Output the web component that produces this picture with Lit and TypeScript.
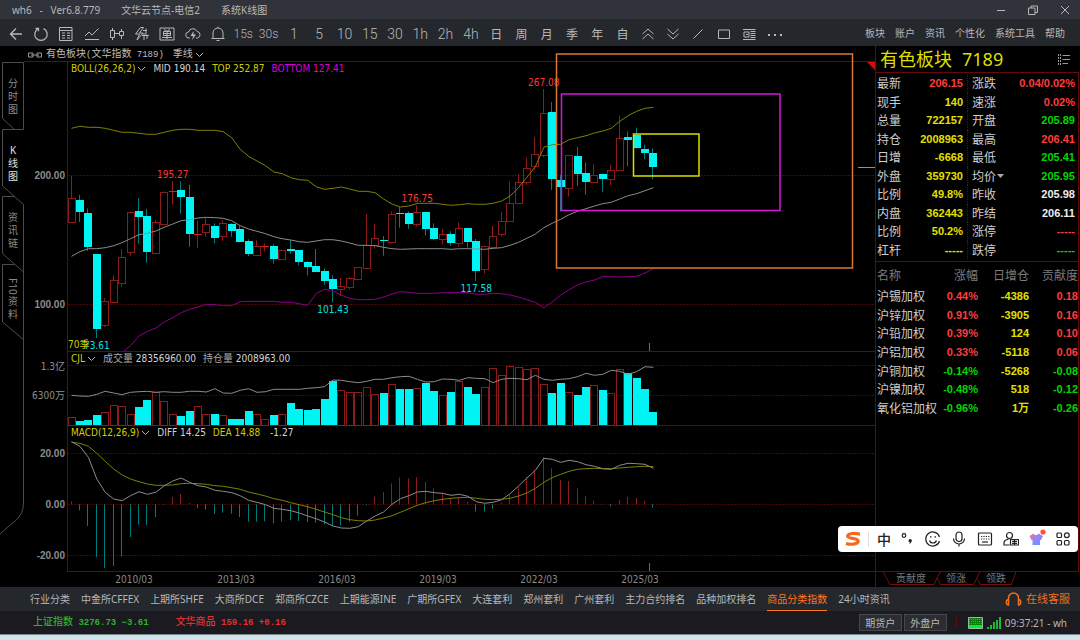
import { LitElement, html, svg, css } from "lit";
import { customElement } from "lit/decorators.js";
import { classMap } from "lit/directives/class-map.js";

/* One quarter per entry: rising flag, then high / body top / body bottom / low
   on a vertical scale of three units to the pixel. */
type Candle = [number, number, number, number, number];
const CANDLES: Candle[] = [
  [1, 347, 414, 485, 488], [0, 405, 420, 456, 486], [0, 445, 459, 560, 573], [0, 582, 582, 806, 834],
  [1, 714, 724, 794, 801], [1, 646, 661, 727, 729], [1, 567, 591, 668, 681], [1, 455, 455, 577, 587],
  [0, 415, 454, 471, 550], [0, 447, 468, 575, 608], [1, 480, 487, 578, 580], [1, 394, 397, 491, 493],
  [1, 363, 393, 394, 434], [0, 364, 390, 412, 461], [0, 374, 412, 522, 560], [1, 482, 523, 524, 565],
  [1, 473, 493, 515, 530], [0, 490, 497, 535, 550], [1, 481, 488, 527, 543], [0, 490, 492, 513, 530],
  [0, 497, 507, 545, 547], [0, 538, 544, 583, 588], [1, 541, 557, 584, 585], [1, 550, 557, 558, 574],
  [0, 553, 557, 598, 611], [1, 569, 569, 596, 599], [0, 540, 566, 573, 581], [0, 570, 571, 605, 616],
  [0, 603, 607, 620, 646], [0, 567, 619, 635, 635], [0, 625, 633, 664, 675], [0, 645, 657, 687, 727],
  [1, 654, 679, 686, 708], [1, 652, 655, 680, 688], [1, 622, 622, 656, 661], [1, 462, 556, 625, 628],
  [1, 491, 535, 554, 566], [0, 528, 540, 544, 587], [1, 454, 463, 545, 551], [0, 441, 459, 461, 503],
  [0, 454, 458, 492, 506], [1, 436, 457, 491, 500], [0, 456, 457, 507, 527], [0, 490, 504, 538, 540],
  [1, 507, 523, 538, 553], [0, 514, 523, 549, 558], [1, 487, 505, 548, 560], [0, 503, 504, 545, 563],
  [0, 537, 544, 633, 663], [1, 558, 559, 628, 641], [1, 498, 528, 560, 563], [1, 456, 484, 523, 529],
  [1, 365, 430, 482, 484], [1, 342, 366, 428, 431], [1, 293, 325, 367, 375], [1, 232, 283, 319, 330],
  [1, 87, 160, 284, 292], [0, 126, 157, 356, 390], [0, 345, 361, 381, 455], [1, 286, 286, 383, 410],
  [0, 261, 288, 341, 378], [0, 307, 340, 366, 404], [1, 313, 344, 365, 366], [0, 341, 343, 356, 397],
  [1, 316, 331, 356, 375], [1, 167, 235, 331, 333], [0, 215, 231, 240, 319], [0, 203, 226, 264, 266],
  [0, 254, 267, 278, 298], [0, 265, 278, 322, 358],
];
const BOLL_TOP = [205, 199, 202, 202, 205, 211, 217, 217, 220, 223, 223, 217, 211, 208, 208, 211, 211, 211, 215, 233, 268, 289, 303, 317, 336, 341, 353, 359, 361, 380, 388, 385, 381, 387, 394, 394, 398, 417, 432, 441, 438, 430, 430, 430, 433, 436, 434, 431, 433, 433, 430, 423, 408, 383, 352, 320, 262, 254, 253, 239, 233, 227, 219, 213, 205, 184, 167, 154, 145, 142];
const BOLL_MID = [589, 575, 566, 566, 563, 557, 548, 536, 524, 520, 513, 502, 492, 482, 479, 474, 472, 473, 475, 482, 497, 507, 514, 521, 530, 536, 540, 545, 547, 543, 539, 539, 543, 549, 556, 556, 557, 562, 566, 568, 567, 566, 566, 566, 566, 568, 566, 566, 567, 568, 565, 563, 556, 547, 535, 522, 503, 490, 478, 464, 454, 446, 438, 431, 427, 417, 407, 401, 392, 383];
const BOLL_LOW = [857, 828, 814, 804, 786, 773, 758, 748, 741, 733, 734, 737, 737, 725, 724, 724, 724, 724, 727, 727, 731, 736, 701, 688, 692, 706, 715, 719, 719, 718, 711, 702, 695, 697, 700, 700, 700, 698, 698, 698, 698, 703, 703, 700, 701, 705, 711, 719, 727, 743, 726, 705, 689, 675, 666, 660, 650, 650, 651, 650, 649, 639, 626];
const VOLUME = [232, 243, 241, 226, 217, 196, 199, 223, 202, 179, 157, 184, 223, 229, 213, 199, 223, 223, 226, 237, 238, 214, 223, 237, 226, 223, 189, 208, 210, 207, 177, 123, 151, 156, 156, 142, 163, 160, 133, 147, 148, 145, 130, 153, 166, 157, 124, 140, 162, 142, 85, 106, 79, 82, 86, 85, 133, 160, 129, 157, 166, 141, 136, 150, 160, 88, 100, 115, 146, 216];
const OPEN_INTEREST = [166, 168, 169, 163, 154, 159, 164, 157, 155, 154, 157, 155, 157, 157, 154, 154, 156, 146, 159, 160, 151, 146, 157, 155, 148, 148, 148, 148, 145, 143, 140, 120, 121, 125, 128, 124, 118, 118, 113, 110, 109, 118, 126, 125, 117, 118, 121, 113, 115, 116, 128, 118, 115, 116, 119, 106, 118, 121, 118, 116, 110, 100, 106, 103, 91, 94, 103, 95, 80, 82];
const MACD = [484, 511, 558, 651, 684, 678, 649, 591, 554, 555, 531, 494, 471, 462, 489, 504, 509, 522, 518, 521, 531, 545, 545, 544, 550, 545, 541, 543, 546, 548, 553, 557, 556, 545, 527, 495, 470, 456, 430, 412, 415, 411, 426, 445, 459, 475, 474, 486, 515, 515, 506, 488, 465, 440, 412, 390, 352, 385, 420, 423, 445, 468, 482, 494, 499, 480, 471, 474, 483, 503];
const DIFF = [305, 319, 352, 417, 457, 477, 482, 467, 455, 463, 457, 437, 423, 414, 427, 437, 441, 451, 454, 458, 467, 481, 487, 494, 505, 508, 512, 519, 528, 536, 546, 558, 564, 565, 560, 543, 528, 516, 493, 476, 467, 456, 454, 458, 460, 466, 463, 469, 485, 490, 487, 479, 461, 438, 414, 391, 355, 358, 367, 361, 365, 374, 379, 386, 388, 376, 370, 371, 373, 385];
const DEA = [307, 310, 319, 340, 364, 387, 405, 417, 425, 432, 436, 436, 435, 431, 430, 431, 433, 437, 439, 443, 448, 456, 462, 468, 476, 481, 488, 494, 500, 508, 516, 524, 533, 539, 542, 543, 540, 534, 527, 517, 506, 496, 488, 482, 478, 475, 473, 472, 475, 478, 479, 478, 475, 468, 459, 445, 427, 413, 403, 394, 388, 386, 385, 386, 386, 384, 382, 380, 379, 380];

const barX = (i: number) => 3.5 + i * 8.434;
const barLeft = (i: number) => Math.round(barX(i)) - 4;
const priceY = (v: number) => v / 3 - 16;
const volumeY = (v: number) => v / 3 - 25;
const macdY = (v: number) => v / 3 - 100;
const trace = (data: number[], y: (v: number) => number, from = 0) =>
  data.map((v, i) => `${barX(i + from).toFixed(1)},${y(v).toFixed(1)}`).join(" ");

const chevron = html`<svg class="chev" viewBox="0 0 9 6" aria-hidden="true"><path d="M1 1l3.5 3.5L8 1" /></svg>`;

@customElement("price-chart")
class PriceChart extends LitElement {
  static styles = css`
    :host { display: flex; flex-direction: column; min-width: 0; font: 10px/14px "DejaVu Sans Condensed", "DejaVu Sans", "Noto Sans CJK SC", sans-serif; color: #d4d4d4; }
    .head { display: flex; align-items: center; gap: 4px; height: 16px; box-sizing: border-box; padding: 2px 0 0 4px; border-bottom: 1px solid #640a0a; font-family: "Liberation Mono", "Noto Sans CJK SC", monospace; line-height: 12px; color: #bdbdbd; white-space: pre; }
    .chain { width: 14px; height: 8px; fill: none; stroke: #999; }
    .small { font-size: 9px; }
    button { display: inline-flex; align-items: center; gap: 2px; padding: 0; border: 0; background: none; font: inherit; color: inherit; }
    .period { margin-left: 5px; }
    .chev { width: 9px; height: 6px; fill: none; stroke: currentColor; }
    .pane { display: grid; grid-template: minmax(0, 1fr) / 43px minmax(0, 1fr); }
    .pane-price { height: 290px; }
    .pane-volume { height: 74px; }
    .pane-macd { height: 146px; }
    .body { display: flex; flex-direction: column; min-width: 0; min-height: 0; border-left: 1px solid #640a0a; border-bottom: 1px solid #640a0a; }
    .legend { display: flex; align-items: center; gap: 7px; flex: none; height: 14px; padding-left: 3px; white-space: pre; }
    .pane-volume .legend { height: 13px; }
    .plot, .scale { display: block; width: 100%; overflow: visible; }
    .plot { flex: 1 1 0; height: 0; min-height: 0; }
    .scale { height: 100%; min-height: 0; }
    .scale text { text-anchor: end; fill: #8c8c8c; font: 10px "DejaVu Sans Condensed", "Noto Sans CJK SC", sans-serif; }
    .scale .b { font: bold 10px "Liberation Sans", sans-serif; }
    .dates { display: block; height: 15px; margin-left: 44px; overflow: visible; }
    .dates text { text-anchor: middle; fill: #8a8a8a; }
    .yellow { color: #cfcf00; }
    .magenta { color: #d800d8; }
    .dim { color: #a8a8a8; }
    .grid { stroke: #480606; stroke-dasharray: 2 1; shape-rendering: crispEdges; }
    .rise { fill: none; stroke: #8c1c1c; }
    .candle-fall { fill: #00f4f4; }
    .wick-fall { stroke: #007c7c; }
    .tl { fill: none; stroke: #808000; }
    .ml { fill: none; stroke: #8c8c8c; }
    .bl { fill: none; stroke: #8a008a; }
    .mark { text-anchor: middle; }
    .high { fill: #ff3838; }
    .low { fill: #00e0e0; }
    .tick { stroke: #6a6a6a; }
  `;

  private candle([rise, high, top, bottom, low]: Candle, i: number) {
    const x = barLeft(i);
    const cx = x + 3.5;
    const yt = Math.round(priceY(top));
    const h = Math.max(1, Math.round(priceY(bottom)) - yt);
    const yh = priceY(high);
    const yl = priceY(low);
    if (!rise) {
      return svg`<path class="wick-fall" d="M${cx} ${yh}V${yl}" /><rect class="candle-fall" x=${x} y=${yt} width="8" height=${h} />`;
    }
    if (h <= 1) {
      return svg`<path class="rise" d="M${cx} ${yh}V${yl}" /><path stroke="#d02020" d="M${x} ${yt + 0.5}h8" />`;
    }
    return svg`<path class="rise" d="M${cx} ${yh}V${yt}M${cx} ${yt + h}V${yl}" /><rect class="rise" x=${x + 0.5} y=${yt + 0.5} width="7" height=${h} />`;
  }

  private volumeBar(v: number, i: number) {
    const x = barLeft(i);
    const y = Math.round(volumeY(v));
    return CANDLES[i][0]
      ? svg`<rect class="rise" x=${x + 0.5} y=${y + 0.5} width="7" height=${60 - y} />`
      : svg`<rect class="candle-fall" x=${x} y=${y} width="8" height=${60 - y} />`;
  }

  private macdBar(v: number, i: number) {
    const x = barLeft(i) + 3.5;
    return svg`<path stroke=${v < 493 ? "#8c1c1c" : "#007c7c"} d="M${x} ${macdY(493)}V${macdY(v)}" />`;
  }

  private mark(i: number, y: number, text: string, cls: string) {
    return svg`<text class="mark ${cls}" x=${barX(i)} y=${y}>${text}</text>`;
  }

  render() {
    return html`
      <div class="head">
        <svg class="chain" viewBox="0 0 14 8"><path d="M.5 2h4.5v4H.5zM9 2h4.500v4H9zM3 4h8" /></svg>
        <span>有色板块<span class="small">(</span>文华指数<span class="small"> 7189)</span></span>
        <button class="period">季线${chevron}</button>
      </div>
      <section class="pane pane-price">
        <svg class="scale"><text class="b" x="41" y="117">200.00</text><text class="b" x="41" y="246">100.00</text></svg>
        <div class="body">
          <div class="legend">
            <button class="yellow">BOLL(26,26,2)${chevron}</button><span>MID 190.14</span>
            <span class="yellow">TOP 252.87</span><span class="magenta">BOTTOM 127.41</span>
          </div>
          <svg class="plot">
            <line class="grid" x1="0" x2="100%" y1="99.5" y2="99.5" />
            <line class="grid" x1="0" x2="100%" y1="228.5" y2="228.5" />
            ${CANDLES.map((c, i) => this.candle(c, i))}
            <polyline class="tl" points=${trace(BOLL_TOP, priceY)} />
            <polyline class="ml" points=${trace(BOLL_MID, priceY)} />
            <polyline class="bl" points=${"56,275 " + trace(BOLL_LOW, priceY, 7)} />
            <text x="0" y="272" fill="#cfcf00">70季</text>
            ${this.mark(3, 273, "73.61", "low")}
            ${this.mark(12, 102, "195.27", "high")}
            ${this.mark(31, 237, "101.43", "low")}
            ${this.mark(41, 126, "176.75", "high")}
            ${this.mark(48, 216, "117.58", "low")}
            ${this.mark(56, 10, "267.08", "high")}
            <path class="tick" d="M581.5 267v8" />
            <rect x="488.5" y="-22" width="296" height="214" fill="none" stroke="#dc7830" stroke-width="1.5" />
            <rect x="493.5" y="18" width="218.5" height="116.5" fill="none" stroke="#d818d8" stroke-width="1.5" />
            <rect x="565.5" y="58" width="65.5" height="42" fill="none" stroke="#dcdc00" stroke-width="1.5" />
            <svg x="100%" overflow="visible"><polygon points="-8,-14 0,-14 0,-6" fill="#d01010" /><path stroke="#909090" d="M-17 91.5H0" /></svg>
          </svg>
        </div>
      </section>
      <section class="pane pane-volume">
        <svg class="scale"><text x="41" y="18">1.3亿</text><text x="41" y="47">6300万</text></svg>
        <div class="body">
          <div class="legend">
            <button class="yellow">CJL${chevron}</button>
            <span><span class="dim">成交量 </span>28356960.00</span><span><span class="dim">持仓量 </span>2008963.00</span>
          </div>
          <svg class="plot">
            <line class="grid" x1="0" x2="100%" y1=".5" y2=".5" />
            <line class="grid" x1="0" x2="100%" y1="30.5" y2="30.5" />
            ${VOLUME.map((v, i) => this.volumeBar(v, i))}
            <polyline class="ml" points=${trace(OPEN_INTEREST, volumeY)} />
          </svg>
        </div>
      </section>
      <section class="pane pane-macd">
        <svg class="scale"><text class="b" x="41" y="31">20.00</text><text class="b" x="41" y="82">0.00</text><text class="b" x="41" y="133">-20.00</text></svg>
        <div class="body">
          <div class="legend">
            <button class="yellow">MACD(12,26,9)${chevron}</button><span>DIFF 14.25</span>
            <span class="yellow">DEA 14.88</span><span> -1.27</span>
          </div>
          <svg class="plot">
            <line class="grid" x1="0" x2="100%" y1="13.5" y2="13.5" />
            <line class="grid" x1="0" x2="100%" y1="64.5" y2="64.5" />
            <line class="grid" x1="0" x2="100%" y1="115.5" y2="115.5" />
            ${MACD.map((v, i) => this.macdBar(v, i))}
            <polyline class="tl" points=${trace(DEA, macdY)} />
            <polyline class="ml" points=${trace(DIFF, macdY)} />
            <path class="tick" d="M581.5 123v8" />
          </svg>
        </div>
      </section>
      <svg class="dates">
        ${[2010, 2013, 2016, 2019, 2022, 2025].map((y, i) => svg`<text x=${Math.round(66.3 + i * 101.2)} y="11">${y}/03</text>`)}
      </svg>
    `;
  }
}

const QUOTE: [string, string, string][] = [
  ["最新", "206.15", "r"], ["涨跌", "0.04/0.02%", "r"],
  ["现手", "140", "y"], ["速涨", "0.02%", "r"],
  ["总量", "722157", "y"], ["开盘", "205.89", "g"],
  ["持仓", "2008963", "y"], ["最高", "206.41", "r"],
  ["日增", "-6668", "y"], ["最低", "205.41", "g"],
  ["外盘", "359730", "y"], ["均价", "205.95", "g"],
  ["比例", "49.8%", "y"], ["昨收", "205.98", "w"],
  ["内盘", "362443", "y"], ["昨结", "206.11", "w"],
  ["比例", "50.2%", "y"], ["涨停", "-----", "r"],
  ["杠杆", "-----", "y"], ["跌停", "-----", "g"],
];
const MEMBERS = [
  ["沪锡加权", "0.44%", "-4386", "0.18"], ["沪锌加权", "0.91%", "-3905", "0.16"],
  ["沪铅加权", "0.39%", "124", "0.10"], ["沪铝加权", "0.33%", "-5118", "0.06"],
  ["沪铜加权", "-0.14%", "-5268", "-0.08"], ["沪镍加权", "-0.48%", "518", "-0.12"],
  ["氧化铝加权", "-0.96%", "1万", "-0.26"],
];

@customElement("quote-panel")
class QuotePanel extends LitElement {
  static styles = css`
    :host { display: flex; flex-direction: column; width: 205px; box-sizing: border-box; flex: none; border-left: 1px solid #640a0a; font: 12px/16px "Noto Sans CJK SC", sans-serif; color: #cdcdcd; }
    .title { display: flex; align-items: center; gap: 10px; height: 26px; padding: 0 10px 0 4px; color: #dede00; font: 18px/26px "Noto Sans", "Noto Sans CJK SC", sans-serif; margin: 0; }
    .menu { width: 12px; height: 11px; margin-left: auto; fill: none; stroke: #999; }
    .wrap { flex: 1; display: flex; flex-direction: column; margin-right: 1px; border: 1px solid #640a0a; border-left: 0; }
    .quote { display: grid; grid-template-columns: 91px 1fr; grid-template-rows: repeat(10, 1fr); height: 185px; padding: 1px 0 2px; margin: 0; border-bottom: 1px solid #640a0a; }
    .cell { display: flex; align-items: center; justify-content: space-between; padding: 0 4px 0 1px; }
    .cell:nth-child(even) { padding: 0 3px 0 4px; border-left: 1px dotted #640a0a; }
    dd { margin: 0; font: bold 11px/16px "Liberation Sans", sans-serif; }
    dt { display: flex; align-items: center; }
    .caret { width: 7px; height: 4px; fill: #aaa; margin-left: 1px; }
    .r { color: #ff3c3c; }
    .g { color: #00d800; }
    .y { color: #e0e000; }
    .w { color: #ededed; }
    table { width: 100%; height: 155px; border-collapse: collapse; table-layout: fixed; }
    th, td { padding: 0; text-align: right; white-space: nowrap; font-weight: normal; }
    thead tr { height: 25px; color: #7c7c7c; }
    th:first-child { text-align: left; padding-left: 1px; }
    td { font: bold 11px/16px "Liberation Sans", "Noto Sans CJK SC", sans-serif; }
    .tabs { position: relative; height: 15px; box-sizing: border-box; display: flex; gap: 20px; align-items: center; padding: 0 0 3px 20px; color: #777; font-size: 10px; }
    .tabs button { padding: 0; border: 0; background: none; font: inherit; line-height: 12px; color: inherit; }
    .edge { position: absolute; left: 0; top: -1px; width: 140px; height: 15px; fill: none; stroke: #7a0c0c; }
  `;

  render() {
    return html`
      <h1 class="title">有色板块<span>7189</span><svg class="menu" viewBox="0 0 12 11"><path d="M4.500 1.500H12M4.500 5.500H12M4.500 9.500H10" /><path stroke-dasharray="2 1" d="M.5 0v11M2.500 0v11" /></svg></h1>
      <div class="wrap">
        <dl class="quote">
          ${QUOTE.map(([k, v, c]) => html`<div class="cell">
            <dt>${k}${k === "均价" ? html`<svg class="caret" viewBox="0 0 7 4"><path d="M0 0h7L3.500 4z" /></svg>` : ""}</dt><dd class=${c}>${v}</dd></div>`)}
        </dl>
        <table>
          <colgroup><col width="61" /><col width="41" /><col width="51" /><col width="49" /></colgroup>
          <thead><tr><th scope="col">名称</th><th scope="col">涨幅</th><th scope="col">日增仓</th><th scope="col">贡献度</th></tr></thead>
          <tbody>
            ${MEMBERS.map(([n, p, d, w]) => {
              const tone = p.startsWith("-") ? "g" : "r";
              return html`<tr><th scope="row">${n}</th><td class=${tone}>${p}</td><td class="y">${d}</td><td class=${tone}>${w}</td></tr>`;
            })}
          </tbody>
        </table>
      </div>
      <nav class="tabs">
        <svg class="edge" viewBox="0 0 140 15"><path d="M7 .5l7 13h44l6.500-13M61 7l3.500 6.500h33L104 .5M100.500 7l4 6.500h31L140 .5" /></svg>
        <button>贡献度</button><button>领涨</button><button>领跌</button>
      </nav>
    `;
  }
}

const icon = (body: unknown) => html`<svg class="ico" viewBox="0 0 16 16" aria-hidden="true">${body}</svg>`;
const TOOLS: [string, unknown][] = [
  ["后退", svg`<path stroke-width="1.300" d="M14 8H2.500M8 2.500L2.500 8 8 13.500" />`],
  ["刷新", svg`<path stroke-width="1.200" d="M5.500 2.600A6.200 6.200 0 1 0 10.500 2.600M2.500 2.300h3v3" />`],
  ["报价", svg`<path d="M1.500 1.500h12.500v13H1.500zM1.500 4.500h12.500M4 7h3M9 7h3M4 9.500h3M9 9.500h3M4 12h3M9 12h3" />`],
  ["分时", svg`<path d="M1 10l4-4 3 3 6.500-6.500M1 13.500h14" />`],
  ["K线", svg`<path d="M1.500 4.500h4v7h-4zM3.500 2v2.500M3.500 11.500V14M10.500 5.500h4v4h-4zM12.500 3v2.500M12.500 9.500V13M5.500 7.500h5" />`],
  ["闪电图", svg`<path d="M6.500 1.500L1.500 8h4L3 14l6-7H5.500l4-5.500zM9 4.500h4M12 2.500v7M8 9.500h7M10 7v7M13 9.500v3.500" />`],
  ["下单", svg`<path d="M1 2h14v12H1zM4.500 5.500h7v4h-7zM8 4v9M3 11.500h10M5.500 3l1 2M10.500 3l-1 2M4.500 7.500h7" />`],
  ["云", svg`<path d="M5 12H4a3 3 0 0 1-.5-6A4.500 4.500 0 0 1 12 5.500 3.300 3.300 0 0 1 12.500 12H11" /><path d="M8.500 5L5.500 10H8l-.8 4L11 8.500H8.500z" fill="#b8b8b8" stroke="none" />`],
  ["提醒", svg`<path d="M3 12.500V7a5 5 0 0 1 10 0v5.500M1.500 12.500h13M8 .8V2M6.500 14.500h3" />`],
];
const PERIODS = ["15s", "30s", "1", "5", "10", "15", "30", "1h", "2h", "4h"];
const CJK_PERIODS = ["日", "周", "月", "季", "年", "自"];
const DRAW: [string, unknown][] = [
  ["放大", svg`<path d="M2.500 8L8 3l5.500 5M2.500 13L8 8l5.500 5" />`],
  ["缩小", svg`<path d="M2.500 3L8 8l5.500-5M2.500 8L8 13l5.500-5" />`],
  ["画线", svg`<path d="M3.500 12.500l9-9" />`],
  ["矩形", svg`<path d="M2.500 4h11v8.500h-11z" />`],
  ["栏目", svg`<path d="M2 3.500h12.500M9.500 5.500h5M9.500 7.500h5M9.500 9.500h5M9.500 11.500h5M2 13.500h12.500M3 6h5v5H3zM5 8.500h2" />`],
  ["更多", svg`<path stroke="none" fill="#b8b8b8" d="M2 8h2v2H2zM8 8h2v2H8zM14 8h2v2h-2z" />`],
];
const MENUS = ["板块", "账户", "资讯", "个性化", "系统工具", "帮助"];
const BOARDS = ["行业分类", "中金所CFFEX", "上期所SHFE", "大商所DCE", "郑商所CZCE", "上期能源INE", "广期所GFEX", "大连套利", "郑州套利", "广州套利", "主力合约排名", "品种加权排名", "商品分类指数", "24小时资讯"];

@customElement("app-root")
class AppRoot extends LitElement {
  static styles = css`
    :host { position: relative; display: flex; flex-direction: column; min-height: 100vh; box-sizing: border-box; overflow: hidden; background: #000; color: #b8b8b8; font: 10px/14px "Noto Sans", "Noto Sans CJK SC", sans-serif; }
    button { padding: 0; border: 0; background: none; font: inherit; color: inherit; white-space: nowrap; }
    .titlebar { display: flex; align-items: center; gap: 21px; height: 19px; padding: 0 10px 0 12px; background: #30333a; white-space: pre; }
    .win { display: flex; gap: 22px; margin-left: auto; }
    .win button { display: flex; }
    .win svg { width: 10px; height: 10px; fill: none; stroke: #b8b8b8; }
    .toolbar { display: flex; align-items: center; justify-content: space-between; height: 27px; padding: 0 15px 0 3px; background: #24272c; }
    .tools { display: grid; grid-template-columns: repeat(31, 1fr); align-items: center; width: 784px; height: 27px; box-sizing: border-box; padding-top: 2px; }
    .tools button { display: flex; align-items: center; justify-content: center; min-width: 0; height: 24px; font: 300 14px/16px "Roboto", "Noto Sans CJK SC", sans-serif; }
    .tools .sec { font-size: 12px; }
    .tools .cjk { font: 12px/16px "Noto Sans CJK SC", sans-serif; }
    .ico { flex: none; width: 16px; height: 16px; fill: none; stroke: #b8b8b8; }
    .menus { display: flex; gap: 10px; }
    .main { flex: 1; display: flex; }
    price-chart { flex: 1; }
    .rail { position: relative; width: 24px; padding-top: 16px; box-sizing: border-box; color: #8a8a8a; display: flex; flex-direction: column; }
    .shape { position: absolute; left: 0; top: 0; width: 25px; height: 541px; fill: none; stroke: #4c4c4c; }
    .rail button { display: flex; flex-direction: column; align-items: center; height: 67px; padding: 15px 0 0 2px; line-height: 13px; box-sizing: border-box; }
    .rail .on { color: #e0e0e0; }
    .rail .col { width: 11px; white-space: normal; word-break: break-all; text-align: center; }
    .rail .turned { writing-mode: vertical-rl; line-height: 12px; }
    .boards { display: flex; align-items: stretch; gap: 11px; height: 24px; padding: 0 10px 0 30px; background: #24272c; }
    .boards button { border-bottom: 1px solid transparent; }
    .boards .on { color: #ff7a1c; border-color: #ff7a1c; }
    .boards .service { display: flex; align-items: center; gap: 4px; margin-left: auto; color: #f07020; font-size: 11px; }
    .service svg { width: 17px; height: 14px; fill: none; stroke: #f07020; }
    .status { display: flex; align-items: center; height: 23px; padding: 0 13px 0 33px; background: #1a1a20; border-bottom: 1px solid #7c8a90; }
    .index { font: bold 9px/14px "Liberation Mono", "Noto Sans CJK SC", monospace; white-space: pre; margin-right: 27px; }
    .index b { font-size: 10px; font-weight: 500; }
    .up { color: #e03030; }
    .down { color: #30b030; }
    .right { display: flex; align-items: center; gap: 2px; margin-left: auto; }
    .right button { width: 43px; height: 17px; background: #2c2d33; border: 1px solid #46474d; }
    .bar { width: 1px; height: 11px; margin: 0 9px 0 7px; background: #640a0a; }
    .net { width: 34px; height: 14px; margin-right: 1px; }
    .desk { height: 5px; background: #cfe4eb; }
    .ime { position: absolute; right: 2px; bottom: 88px; display: flex; align-items: center; gap: 8px; height: 26px; padding: 0 6px 0 6px; border-radius: 4px; background: #fff; color: #222; }
    .ime button { display: flex; align-items: center; justify-content: center; width: 18px; height: 22px; font: 500 14px/20px "Noto Sans CJK SC", sans-serif; }
    .ime svg { width: 16px; height: 16px; fill: none; stroke: #222; stroke-width: 1.2; }
    .ime .gap { width: 1px; height: 15px; background: #ddd; margin: 0 -2px 0 -2px; }
    .ime .gap + button { margin-right: -3px; }
  `;

  render() {
    return html`
      <header class="titlebar">
        <span>wh6   -   Ver6.8.779</span><span>文华云节点-电信2</span><span>系统K线图</span>
        <div class="win">
          <button aria-label="最小化"><svg viewBox="0 0 10 10"><path d="M1 5.500h8" /></svg></button>
          <button aria-label="还原"><svg viewBox="0 0 10 10"><path d="M.5 3h6.500v6.500H.5zM3 3V1h6.500v6.500H7" /></svg></button>
          <button aria-label="关闭"><svg viewBox="0 0 10 10"><path d="M1 1l8 8M9 1L1 9" /></svg></button>
        </div>
      </header>
      <div class="toolbar">
        <div class="tools">
          ${TOOLS.map(([t, b]) => html`<button aria-label=${t}>${icon(b)}</button>`)}
          ${PERIODS.map((p) => html`<button class=${classMap({ sec: p.endsWith("s") })}>${p}</button>`)}
          ${CJK_PERIODS.map((p) => html`<button class="cjk">${p}</button>`)}
          ${DRAW.map(([t, b]) => html`<button aria-label=${t}>${icon(b)}</button>`)}
        </div>
        <nav class="menus">${MENUS.map((m) => html`<button>${m}</button>`)}</nav>
      </div>
      <div class="main">
        <nav class="rail">
          <svg class="shape" viewBox="0 0 25 541">
            <path d="M23.500 83.500V16.500H2.500V72.500L14.500 83.500M23.500 83.500H2.500V140L23.500 158.500M14.500 150.500H2.500V207.500L23.500 226M14.500 218.500H2.500V276L23.500 293.500M23.500 158.500V457C23.500 473 12 476 0 488" />
          </svg>
          <button><span class="col">分时图</span></button>
          <button class="on"><span class="col">K线图</span></button>
          <button><span class="col">资讯链</span></button>
          <button><span class="turned">F10</span><span class="col">资料</span></button>
        </nav>
        <price-chart></price-chart>
        <quote-panel></quote-panel>
      </div>
      <nav class="boards">
        ${BOARDS.map((b) => html`<button class=${classMap({ on: b === "商品分类指数" })}>${b}</button>`)}
        <button class="service"><svg viewBox="0 0 17 14"><path stroke-width="1.500" d="M3.500 7V6a5 5 0 0 1 10 0v1M3.500 7.500a2 2.500 0 1 0 0 5.500zM13.500 7.500a2 2.500 0 1 1 0 5.500z" /></svg>在线客服</button>
      </nav>
      <footer class="status">
        <span class="index down"><b>上证指数</b> 3276.73 −3.61</span>
        <span class="index up"><b>文华商品</b> 159.16 +0.16</span>
        <div class="right">
          <button>期货户</button><button>外盘户</button><span class="bar"></span>
          <svg class="net" viewBox="0 0 34 14">
            <path fill="#0a7a14" stroke="#9ab89a" d="M.5 1.500h14v11H.5z" /><path stroke="#18c828" stroke-dasharray="1 1" d="M1 3.500h13M1 5.500h13M1 7.500h13" /><path fill="#00f020" d="M1 9h13v3H1z" />
            <path fill="#20b830" d="M19 11h2v2h-2zM22 9h2v4h-2zM25 6h2v7h-2zM28 4h2v9h-2zM31 1h2v12h-2z" />
          </svg>
          <span>09:37:21 - wh</span>
        </div>
      </footer>
      <div class="desk"></div>
      <div class="ime">
        <button aria-label="搜狗"><svg viewBox="0 0 16 16"><path stroke="#f4691e" stroke-width="3.200" d="M15 3.200C10 1.800 3 2 2.600 5.200 2.400 8 13.500 6.800 13.200 10.200 13 13.600 5 13.800 1 12.400" /></svg></button>
        <span class="gap"></span>
        <button>中</button>
        <button aria-label="标点"><svg viewBox="0 0 16 16"><circle cx="5" cy="4.500" r="1.800" /><path fill="#222" stroke="none" d="M9.500 9.500a1.700 1.700 0 1 1 2.800 1.600L10.500 13.500l.3-2.200a1.700 1.700 0 0 1-1.300-1.800z" /></svg></button>
        <button aria-label="表情"><svg viewBox="0 0 16 16"><path d="M14.500 6A7 7 0 1 0 14.500 10M4.500 9.500a3.700 3.700 0 0 0 7 0M5 5.800h1.500M9.500 5.800H11" /></svg></button>
        <button aria-label="语音"><svg viewBox="0 0 16 16"><rect x="5" y="1" width="6" height="9.500" rx="3" /><path d="M2.500 7.500a5.500 5.500 0 0 0 11 0M8 13v2.500" /></svg></button>
        <button aria-label="键盘"><svg viewBox="0 0 16 16"><rect x="1.500" y="2" width="13" height="12" rx="1" /><path stroke-dasharray="1.200 1.200" d="M4 5.500h8.500M4 8h8.500" /><path d="M5 11h6" /></svg></button>
        <button aria-label="身份"><svg viewBox="0 0 16 16"><circle cx="6.500" cy="4.500" r="3" /><path d="M6.500 14H1v-2c0-2.500 2-3.500 4.500-3.500M7.500 8.500h8v5.500h-8zM9 10.300h5M9 12.300h5M11.500 9v5" /></svg></button>
        <button aria-label="皮肤"><svg viewBox="0 0 16 16" overflow="visible"><defs><linearGradient id="skin" x1="0" y1="0" x2="1" y2="1"><stop offset="0" stop-color="#ff7a60" /><stop offset=".45" stop-color="#9a80ff" /><stop offset="1" stop-color="#50a0ff" /></linearGradient></defs><path fill="url(#skin)" stroke="none" d="M.5 5l4-2.500c1 2 4 2 5 0L14 5l-2 4h-1v5H3.500V9h-1z" /><circle cx="14" cy="1" r="2.600" fill="#ff5030" stroke="none" /></svg></button>
        <button aria-label="工具箱"><svg viewBox="0 0 16 16"><rect x="2" y="2" width="4.500" height="4.500" rx="1" /><circle cx="11.800" cy="4.200" r="2.400" /><rect x="2" y="9.500" width="4.500" height="4.500" rx="1" /><rect x="9.500" y="9.500" width="4.500" height="4.500" rx="1" /></svg></button>
      </div>
    `;
  }
}
